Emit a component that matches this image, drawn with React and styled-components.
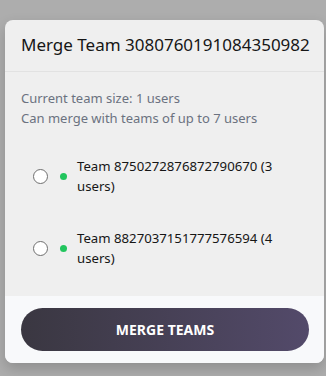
import React from "react";
import styled, { createGlobalStyle } from "styled-components";

const Global = createGlobalStyle`
  html, body { margin: 0; padding: 0; background: #adadad; }
  body { font-family: "Noto Sans", "Open Sans", sans-serif; }
  #root { min-height: 376px; }
`;

const Page = styled.div`
  height: 376px;
  padding: 20px 2px 0 5px;
  box-sizing: border-box;
  background: #adadad;
  overflow: hidden;
`;

const Dialog = styled.div`
  width: 319px;
  background: #efefef;
  border-radius: 8px;
  overflow: hidden;
  box-shadow: 0 6px 14px rgba(0, 0, 0, 0.18);
`;

const Header = styled.div`
  padding: 14px 16px 15px;
  border-bottom: 1px solid #e2e2e2;
`;

const Title = styled.h2`
  margin: 0;
  font-size: 17px;
  font-weight: 400;
  line-height: 22px;
  color: #161616;
  white-space: nowrap;
`;

const Body = styled.div`
  padding: 16px 16px 12px;
`;

const Info = styled.p`
  margin: 0;
  font-size: 13px;
  line-height: 20px;
  color: #6b7280;
`;

const List = styled.div`
  margin-top: 12px;
  display: flex;
  flex-direction: column;
`;

const Item = styled.label`
  display: flex;
  align-items: center;
  padding: 16px 12px;
  cursor: pointer;
`;

const Radio = styled.span`
  flex: none;
  width: 15px;
  height: 15px;
  box-sizing: border-box;
  border: 1px solid #6f6f6f;
  border-radius: 50%;
  background: #fff;
`;

const Dot = styled.span`
  flex: none;
  width: 7px;
  height: 7px;
  border-radius: 50%;
  background: ${(p) => p.color};
  margin: 0 10px 0 12px;
`;

const Name = styled.span`
  font-size: 13.2px;
  line-height: 20px;
  color: #161616;
`;

const Footer = styled.div`
  background: #f8f9fb;
  padding: 12px 15px 12px 16px;
`;

const Button = styled.button`
  display: block;
  width: 100%;
  height: 43px;
  border: none;
  border-radius: 22px;
  background: linear-gradient(90deg, #3a3741 0%, #534a6a 100%);
  color: #fff;
  font-family: inherit;
  font-size: 14px;
  font-weight: 700;
  letter-spacing: 0;
  cursor: pointer;
`;

const teams = [
  { id: "8750272876872790670", users: 3 },
  { id: "8827037151777576594", users: 4 },
];

export default function App() {
  return (
    <>
      <Global />
      <Page>
        <Dialog>
          <Header>
            <Title>Merge Team 3080760191084350982</Title>
          </Header>
          <Body>
            <Info>Current team size: 1 users</Info>
            <Info>Can merge with teams of up to 7 users</Info>
            <List>
              {teams.map((t) => (
                <Item key={t.id}>
                  <Radio />
                  <Dot color="#22c55e" />
                  <Name>
                    Team {t.id} ({t.users} users)
                  </Name>
                </Item>
              ))}
            </List>
          </Body>
          <Footer>
            <Button>MERGE TEAMS</Button>
          </Footer>
        </Dialog>
      </Page>
    </>
  );
}
